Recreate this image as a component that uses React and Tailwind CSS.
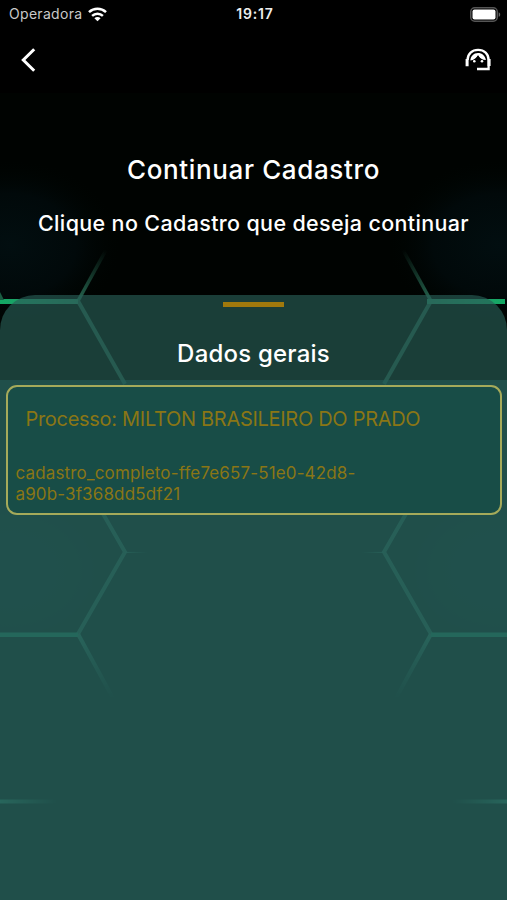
import React from "react";

const processos = [
  {
    nome: "MILTON BRASILEIRO DO PRADO",
    id: "cadastro_completo-ffe7e657-51e0-42d8-a90b-3f368dd5df21",
  },
];

function HexBackground() {
  return (
    <svg
      className="absolute inset-0 h-full w-full"
      viewBox="0 0 507 900"
      preserveAspectRatio="none"
      fill="none"
    >
      <defs>
        <radialGradient id="glow">
          <stop offset="0" stopColor="#020e10" />
          <stop offset="0.6" stopColor="#01090a" />
          <stop offset="1" stopColor="#000502" stopOpacity="0" />
        </radialGradient>
        <linearGradient id="rise" gradientUnits="userSpaceOnUse" x1="78" y1="301" x2="106" y2="250">
          <stop stopColor="#25644e" />
          <stop offset="1" stopColor="#25644e" stopOpacity="0" />
        </linearGradient>
        <linearGradient id="side" gradientUnits="userSpaceOnUse" x1="0" y1="0" x2="80" y2="0">
          <stop stopColor="#12a963" />
          <stop offset="0.35" stopColor="#219b6a" />
          <stop offset="1" stopColor="#2b8062" />
        </linearGradient>
        <linearGradient id="fall" gradientUnits="userSpaceOnUse" x1="78" y1="634" x2="114" y2="700">
          <stop stopColor="#327a62" />
          <stop offset="1" stopColor="#327a62" stopOpacity="0" />
        </linearGradient>
        <linearGradient id="inner" gradientUnits="userSpaceOnUse" x1="125" y1="0" x2="148" y2="0">
          <stop stopColor="#2f6a56" />
          <stop offset="1" stopColor="#2f6a56" stopOpacity="0" />
        </linearGradient>
        <linearGradient id="low" gradientUnits="userSpaceOnUse" x1="0" y1="0" x2="58" y2="0">
          <stop stopColor="#2f8a6a" />
          <stop offset="1" stopColor="#2f8a6a" stopOpacity="0" />
        </linearGradient>
        <g id="hexSide">
          <ellipse cx="10" cy="245" rx="110" ry="85" fill="url(#glow)" />
          <ellipse cx="10" cy="570" rx="115" ry="90" fill="url(#glow)" />
          <path d="M78 301L106 250" stroke="url(#rise)" strokeWidth="3.5" />
          <path d="M78 301L125 384" stroke="#245646" strokeWidth="4" />
          <path d="M102 512L125 552L78 634" stroke="#2b6350" strokeWidth="4" />
          <path d="M78 634L114 700" stroke="url(#fall)" strokeWidth="4" />
          <path d="M125 551.9h23v1h-23z" fill="url(#inner)" />
          <path d="M0 632.5h78v4.5H0z" fill="#1b9466" />
          <path d="M0 799.5h58v4H0z" fill="url(#low)" />
        </g>
      </defs>
      <use href="#hexSide" />
      <use href="#hexSide" transform="matrix(-1 0 0 1 509 0)" />
      <path d="M0 299h78v5H0z" fill="url(#side)" />
      <path d="M0 299h78v5H0z" fill="url(#side)" transform="matrix(-1 0 0 1 505 0)" />
      <path d="M0 292l4 8H0z" fill="#195c42" />
    </svg>
  );
}

function BackIcon() {
  return (
    <svg className="h-[26px] w-[17px]" viewBox="0 0 17 26" fill="none" stroke="currentColor" strokeWidth="3">
      <path d="M14.2 2.2L3.3 13l10.9 10.8" />
    </svg>
  );
}

function SupportIcon() {
  return (
    <svg className="h-6 w-[26px]" viewBox="0 0 26 24" fill="none" stroke="currentColor">
      <path d="M2.6 12C2.6 5.8 7 1.9 13.1 1.9S23.6 5.8 23.6 12v9H12" strokeWidth="2.3" />
      <path d="M2.1 11v7.2M24.1 11v7" strokeWidth="3" />
      <path d="M5.4 12.6C5.6 8 8.7 4.9 12.9 4.9s7.3 2.7 8 7.2c-3.5 0-6-1.8-7.8-4.6C11.4 9.9 8.700 12.100 5.400 12.600z" fill="currentColor" stroke="none" />
      <path d="M13 7.200l3.500 5.300h-7z" fill="#000" stroke="none" />
      <circle cx="9.300" cy="13.300" r="1.300" fill="currentColor" stroke="none" />
      <circle cx="17" cy="13.300" r="1.300" fill="currentColor" stroke="none" />
    </svg>
  );
}

function StatusBar() {
  return (
    <div className="grid h-7 grid-cols-3 items-center pr-1.5 pl-[9px] text-[14px] leading-none">
      <div className="flex items-center gap-1.5 text-[#c9c9c9]">
        <span className="tracking-[0.3px]">Operadora</span>
        <svg className="h-[15px] w-[19px]" viewBox="0 0 19 15" fill="none" stroke="#fff" strokeWidth="2.5">
          <path d="M1 5.2a12.3 12.3 0 0 1 17 0" />
          <path d="M4.1 8.8a7.8 7.8 0 0 1 10.8 0" />
          <path d="M9.5 14.3L6.4 11.3a4.4 4.4 0 0 1 6.2 0z" fill="#fff" stroke="none" />
        </svg>
      </div>
      <span className="text-center font-semibold tracking-[0.8px] text-[#eee]">19:17</span>
      <svg className="h-[15px] w-[31px] justify-self-end" viewBox="0 0 31 15">
        <rect x="0.75" y="0.75" width="26.5" height="13.5" rx="4" fill="#000" stroke="#555" strokeWidth="1.5" />
        <rect x="2.5" y="2.5" width="23" height="10" rx="2" fill="#fff" />
        <path d="M28.7 5.2c2 .8 2 3.8 0 4.6z" fill="#666" />
      </svg>
    </div>
  );
}

export default function App() {
  return (
    <div className="relative isolate flex h-[900px] w-full flex-col overflow-hidden bg-[#000301] font-['Inter','Liberation_Sans',sans-serif] text-white">
      <div className="absolute inset-0 -z-10">
        <HexBackground />
      </div>

      {/* Header */}
      <header className="h-[93px] shrink-0 bg-black">
        <StatusBar />
        <div className="flex h-[63px] items-center justify-between pr-4 pl-5">
          <button aria-label="Voltar">
            <BackIcon />
          </button>
          <button aria-label="Suporte">
            <SupportIcon />
          </button>
        </div>
      </header>

      {/* Title */}
      <div className="flex h-[202px] shrink-0 flex-col items-center pt-[61px] text-center font-medium whitespace-nowrap">
        <h1 className="text-[26px] leading-8 tracking-[0.63px]">Continuar Cadastro</h1>
        <p className="mt-[23px] text-[21.5px] leading-7 tracking-[0.35px]">
          Clique no Cadastro que deseja continuar
        </p>
      </div>

      {/* Sheet */}
      <div className="flex flex-1 flex-col overflow-hidden rounded-t-[35px] bg-[#275c55]/66">
        <div className="flex h-[85px] shrink-0 flex-col items-center pt-[7px]">
          <div className="h-[5px] w-[61px] bg-[#a0790c]" />
          <h2 className="mt-[31px] text-[24px] leading-8 font-medium tracking-[0.2px]">Dados gerais</h2>
        </div>

        <div className="flex-1 bg-[#265f5c]/50 px-[5.5px] pt-[4.5px]">
          {processos.map((processo) => (
            <div
              key={processo.id}
              className="h-[130px] rounded-[11px] border-2 border-[#a5aa5a] bg-[#184d47] px-[8px] text-[#8a7615]"
            >
              <p className="pt-[18.5px] pl-[10px] text-[20px] leading-7 tracking-[-0.3px] whitespace-nowrap">
                Processo: {processo.nome}
              </p>
              <p className="mt-[29.5px] w-[360px] text-[17px] leading-[21px] tracking-[0.14px]">
                {processo.id}
              </p>
            </div>
          ))}
        </div>
      </div>
    </div>
  );
}
